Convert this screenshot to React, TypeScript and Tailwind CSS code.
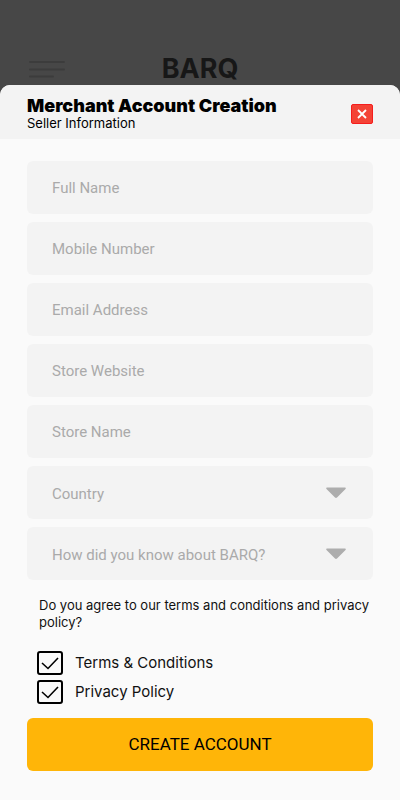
import { useState } from 'react';
import type { FormEvent } from 'react';

type TextField = {
  name: string;
  label: string;
  type: 'text' | 'tel' | 'email' | 'url';
};

type SelectField = {
  name: string;
  label: string;
  options: string[];
};

const TEXT_FIELDS: TextField[] = [
  { name: 'fullName', label: 'Full Name', type: 'text' },
  { name: 'mobile', label: 'Mobile Number', type: 'tel' },
  { name: 'email', label: 'Email Address', type: 'email' },
  { name: 'website', label: 'Store Website', type: 'url' },
  { name: 'storeName', label: 'Store Name', type: 'text' },
];

const SELECT_FIELDS: SelectField[] = [
  { name: 'country', label: 'Country', options: [] },
  { name: 'source', label: 'How did you know about BARQ?', options: [] },
];

const FIELD_CLASS =
  "h-[53px] w-full rounded-md bg-[#f3f3f3] pl-[25px] font-['Roboto',sans-serif] text-[15px] text-[#aaaaaa] outline-none";

function TopBar() {
  return (
    <header className="grid h-[85px] grid-cols-[1fr_auto_1fr] items-end px-7 pb-1">
      <button type="button" aria-label="Menu" className="pb-[3px]">
        <svg width="38" height="18" viewBox="0 0 38 18" fill="none" stroke="#3c3c3c" strokeWidth="2" strokeLinecap="round">
          <path d="M2 2h34M2 9.500h34M2 16.500h23" />
        </svg>
      </button>
      <span className="font-['Inter',sans-serif] text-[27px] leading-6 font-bold text-[#171717]">BARQ</span>
    </header>
  );
}

function SelectInput({ field }: { field: SelectField }) {
  return (
    <div className="relative">
      <select
        name={field.name}
        aria-label={field.label}
        defaultValue=""
        className={`${FIELD_CLASS} block appearance-none pt-[3px] pr-14`}
      >
        <option value="">{field.label}</option>
        {field.options.map((o) => (
          <option key={o}>{o}</option>
        ))}
      </select>
      <svg
        className="pointer-events-none absolute top-[21px] right-[27px]"
        width="20"
        height="12"
        viewBox="0 0 20 12"
        fill="#adadad"
      >
        <path d="M1 .5h18c.9 0 1.100.8.5 1.400L11 10.500c-.6.600-1.400.600-2 0L.5 1.900C-.1 1.300.1.500 1 .5z" />
      </svg>
    </div>
  );
}

function Consent({ label }: { label: string }) {
  const [checked, setChecked] = useState(true);

  return (
    <label className="flex items-center gap-3 font-['Inter',sans-serif] text-[15px] leading-6 text-[#111111]">
      <span className="grid h-6 w-[26px] place-items-center">
        <input
          type="checkbox"
          checked={checked}
          onChange={(e) => setChecked(e.target.checked)}
          className="col-start-1 row-start-1 h-6 w-[26px] appearance-none rounded-[3px] border-2 border-black"
        />
        {checked && (
          <svg
            className="pointer-events-none col-start-1 row-start-1"
            width="18"
            height="14"
            viewBox="0 0 18 14"
            fill="none"
            stroke="#000"
            strokeWidth="1.600"
          >
            <path d="M1 7l6 5.500L17 2" />
          </svg>
        )}
      </span>
      {label}
    </label>
  );
}

export default function App() {
  const handleSubmit = (e: FormEvent) => e.preventDefault();

  return (
    <div className="flex min-h-screen flex-col bg-[#474747]">
      <TopBar />

      {/* Bottom sheet */}
      <main className="flex-1 overflow-hidden rounded-t-[10px] bg-[#fafafa]">
        <div className="flex items-center justify-between bg-[#f3f3f3] px-[27px] pt-[11px] pb-2 font-['Inter',sans-serif] text-black">
          <div>
            <h1 className="text-[18px] leading-5 font-black">Merchant Account Creation</h1>
            <p className="text-[13px] leading-[15px]">Seller Information</p>
          </div>
          <button
            type="button"
            aria-label="Close"
            className="grid h-5 w-[22px] place-items-center rounded-[2px] border border-[#f51d1d] bg-[#f44336]"
          >
            <svg width="10" height="10" viewBox="0 0 10 10" stroke="#fff" strokeWidth="1.800">
              <path d="M1 1l8 8M9 1L1 9" />
            </svg>
          </button>
        </div>

        <form onSubmit={handleSubmit} className="px-[27px] pt-[22px] pb-7">
          <div className="flex flex-col gap-2">
            {TEXT_FIELDS.map((f) => (
              <input
                key={f.name}
                type={f.type}
                name={f.name}
                aria-label={f.label}
                placeholder={f.label}
                className={`${FIELD_CLASS} pr-6 placeholder:text-[#aaaaaa]`}
              />
            ))}
            {SELECT_FIELDS.map((f) => (
              <SelectInput key={f.name} field={f} />
            ))}
          </div>

          <p className="mt-[17px] pl-3 font-['Inter',sans-serif] text-[13px] leading-[17px] text-[#111111]">
            Do you agree to our terms and conditions and privacy policy?
          </p>

          <div className="mt-5 flex flex-col gap-[5px] pl-[10px]">
            <Consent label="Terms & Conditions" />
            <Consent label="Privacy Policy" />
          </div>

          <button
            type="submit"
            className="mt-[14px] h-[53px] w-full rounded-md bg-[#ffb508] font-['Roboto',sans-serif] text-[17px] text-black"
          >
            CREATE ACCOUNT
          </button>
        </form>
      </main>
    </div>
  );
}
